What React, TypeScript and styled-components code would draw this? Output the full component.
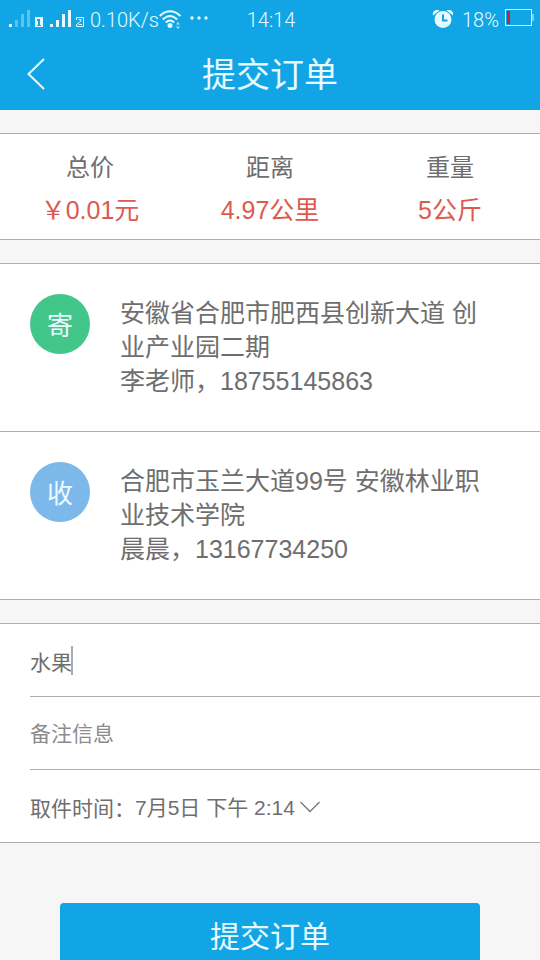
import React, { useState } from "react";
import styled, { createGlobalStyle } from "styled-components";

const GlobalStyle = createGlobalStyle`
  * { box-sizing: border-box; }
  body {
    margin: 0;
    background: #f6f6f6;
    color: #6e6e6e;
    font-family: "Noto Sans CJK SC", "Noto Sans", sans-serif;
    font-weight: 400;
  }
  button, input, select { font: inherit; color: inherit; }
`;

const blue = "#11a5e5";
const line = "#aeaeae";
const mixedFont = `"Liberation Sans", "Noto Sans CJK SC", sans-serif`;

const Screen = styled.div`
  display: flex;
  flex-direction: column;
  height: 100vh;
`;

const StatusBar = styled.div`
  display: grid;
  grid-template-columns: 1fr auto 1fr;
  align-items: center;
  height: 40px;
  padding: 0 6px 0 8px;
  background: ${blue};
  color: #e6fbff;
  font-family: Roboto, sans-serif;
  font-size: 20px;
  font-weight: 300;
  line-height: 40px;
  white-space: nowrap;
`;

const StatusGroup = styled.div<{ $end?: boolean }>`
  display: flex;
  align-items: center;
  justify-content: ${(p) => (p.$end ? "flex-end" : "flex-start")};
  svg { display: block; flex: none; }
`;

const StatusText = styled.span`
  margin: 0 6px 0 8px;
`;

const Speed = styled.span`
  margin: 0 0 0 4px;
`;

const NavBar = styled.header`
  display: grid;
  grid-template-columns: 72px 1fr 72px;
  align-items: start;
  height: 70px;
  background: ${blue};
  color: #e8faff;
`;

const BackButton = styled.button`
  display: flex;
  align-items: center;
  justify-content: center;
  height: 68px;
  padding: 0;
  border: 0;
  background: none;
`;

const Title = styled.h1`
  margin: 0;
  font-size: 34px;
  font-weight: 400;
  line-height: 66px;
  text-align: center;
`;

const Content = styled.main`
  display: flex;
  flex: 1;
  flex-direction: column;
  gap: 23px;
  min-height: 0;
  padding: 23px 0;
  overflow-y: auto;
  scrollbar-width: none;
`;

const Panel = styled.section`
  flex: none;
  border-top: 1px solid ${line};
  border-bottom: 1px solid ${line};
  background: #fff;
`;

const Summary = styled.dl`
  display: grid;
  grid-template-columns: repeat(3, 1fr);
  margin: 0;
  padding: 11px 0 8px;
  text-align: center;
`;

const SummaryLabel = styled.dt`
  font-size: 24px;
  line-height: 42px;
`;

const SummaryValue = styled.dd`
  margin: 0;
  padding-top: 2px;
  color: #dc5a4e;
  font-family: ${mixedFont};
  font-size: 25px;
  line-height: 42px;
`;

const Contact = styled.article`
  display: flex;
  align-items: flex-start;
  gap: 30px;
  padding: 30px 50px 33px 30px;
  & + & { border-top: 1px solid ${line}; }
`;

const Badge = styled.span<{ $color: string }>`
  flex: none;
  width: 60px;
  height: 60px;
  border-radius: 50%;
  background: ${(p) => p.$color};
  color: #effaff;
  font-size: 26px;
  line-height: 60px;
  text-align: center;
`;

const ContactText = styled.p`
  margin: 0;
  padding-top: 2px;
  font-family: ${mixedFont};
  font-size: 25px;
  line-height: 34px;
`;

const ContactLine = styled.span`
  display: block;
`;

const Fields = styled.form`
  padding-left: 30px;
`;

const FieldRow = styled.div`
  display: flex;
  align-items: center;
  height: 72px;
  padding-top: 2px;
  font-family: ${mixedFont};
  font-size: 21px;
  & + & {
    height: 73px;
    border-top: 1px solid ${line};
  }
`;

const TextInput = styled.input<{ $fit?: boolean }>`
  field-sizing: ${(p) => (p.$fit ? "content" : "fixed")};
  flex: ${(p) => (p.$fit ? "none" : "1")};
  min-width: 0;
  height: 42px;
  padding: 0;
  border: 0;
  outline: 0;
  background: none;
  caret-color: transparent;
  &::placeholder { color: #8c8c8c; opacity: 1; }
`;

const Caret = styled.span`
  width: 2px;
  height: 29px;
  margin: 0 0 2px -1px;
  background: #aaa;
`;

const TimeSelect = styled.select`
  appearance: none;
  field-sizing: content;
  height: 42px;
  padding: 0;
  border: 0;
  outline: 0;
  background: none;
`;

const Chevron = styled.svg`
  margin-left: 5px;
`;

const SubmitButton = styled.button`
  display: flex;
  flex: none;
  align-items: flex-start;
  justify-content: center;
  height: 66px;
  margin: 37px 60px 0;
  padding: 9px 0 0;
  border: 0;
  border-radius: 4px;
  background: ${blue};
  color: #e8faff;
  font-size: 30px;
  line-height: 44px;
`;

const summary = [
  { label: "总价", value: "￥0.01元" },
  { label: "距离", value: "4.97公里" },
  { label: "重量", value: "5公斤" },
];

const contacts = [
  {
    badge: "寄",
    color: "#42c689",
    address: "安徽省合肥市肥西县创新大道 创业产业园二期",
    person: "李老师，18755145863",
  },
  {
    badge: "收",
    color: "#7cb8ea",
    address: "合肥市玉兰大道99号 安徽林业职业技术学院",
    person: "晨晨，13167734250",
  },
];

function SignalIcons() {
  return (
    <svg width="78" height="20" viewBox="0 0 78 20" fill="#e6fbff" aria-hidden="true">
      <rect x="1" y="14" width="3" height="3" />
      <g opacity="0.35">
        <rect x="7" y="10" width="3" height="7" />
        <rect x="13" y="4" width="3" height="13" />
        <rect x="19" y="0" width="3" height="17" />
      </g>
      <path fillRule="evenodd" d="M27 7h8v10h-8zM29 9v2h1v4h-1v1h4v-1h-1v-6z" />
      <rect x="42" y="14" width="3" height="3" />
      <rect x="48" y="10" width="3" height="7" />
      <rect x="54" y="4" width="3" height="13" />
      <rect x="60" y="0" width="3" height="17" />
      <path d="M68.500 10V7.500h7V16.500H68.500V14.500L73 11V9.500H70.500M70.500 14.500H74" fill="none" stroke="#e6fbff" />
    </svg>
  );
}

function WifiIcon() {
  return (
    <svg width="23" height="20" viewBox="0 0 23 20" fill="none" stroke="#e6fbff" strokeWidth="2" aria-hidden="true">
      <path d="M.7 6Q11 -3.500 21.500 6M3.800 9.500Q11 2.500 18.200 9.500M6.800 12.500Q11 8.500 15.200 12.500" />
      <circle cx="11" cy="15.500" r="2.500" fill="#e6fbff" stroke="none" />
      <path d="M19 12l2 2.500h-4zM19 19l2-2.500h-4z" fill="#e6fbff" stroke="none" opacity=".75" />
    </svg>
  );
}

function DotsIcon() {
  return (
    <svg width="28" height="20" viewBox="0 0 28 20" fill="#e6fbff" aria-hidden="true">
      <circle cx="10" cy="8" r="1.700" />
      <circle cx="17" cy="8" r="1.700" />
      <circle cx="24" cy="8" r="1.700" />
    </svg>
  );
}

function AlarmIcon() {
  return (
    <svg width="22" height="22" viewBox="0 0 22 22" aria-hidden="true">
      <path d="M1 6.500C0 2 4 0 7.500 1.500ZM21 6.500C22 2 18 0 14.500 1.500Z" fill="#e6fbff" />
      <circle cx="11" cy="10.500" r="8.500" fill="#e6fbff" />
      <path d="M11 5.500v6h4.500" fill="none" stroke={blue} strokeWidth="2" />
    </svg>
  );
}

function BatteryIcon() {
  return (
    <svg width="29" height="22" viewBox="0 0 29 22" aria-hidden="true">
      <rect x=".5" y=".5" width="26" height="16" fill="none" stroke="#d6f5ff" />
      <rect x="2" y="2" width="3" height="13" fill="#c9232d" />
      <path d="M28 5v7" stroke="#d6f5ff" />
    </svg>
  );
}

export default function App() {
  const [goods, setGoods] = useState("水果");
  const [remark, setRemark] = useState("");

  return (
    <Screen>
      <GlobalStyle />
      <StatusBar>
        <StatusGroup>
          <SignalIcons />
          <Speed>0.10K/s</Speed>
          <WifiIcon />
          <DotsIcon />
        </StatusGroup>
        <span>14:14</span>
        <StatusGroup $end>
          <AlarmIcon />
          <StatusText>18%</StatusText>
          <BatteryIcon />
        </StatusGroup>
      </StatusBar>
      <NavBar>
        <BackButton type="button" aria-label="返回">
          <svg width="18" height="32" viewBox="0 0 18 32" fill="none" stroke="#e6fbff" strokeWidth="2" aria-hidden="true">
            <path d="M17 1L1.500 16L17 31" />
          </svg>
        </BackButton>
        <Title>提交订单</Title>
      </NavBar>
      <Content>
        <Panel>
          <Summary>
            {summary.map((item) => (
              <div key={item.label}>
                <SummaryLabel>{item.label}</SummaryLabel>
                <SummaryValue>{item.value}</SummaryValue>
              </div>
            ))}
          </Summary>
        </Panel>
        <Panel>
          {contacts.map((c) => (
            <Contact key={c.badge}>
              <Badge $color={c.color}>{c.badge}</Badge>
              <ContactText>
                <ContactLine>{c.address}</ContactLine>
                <ContactLine>{c.person}</ContactLine>
              </ContactText>
            </Contact>
          ))}
        </Panel>
        <Panel>
          <Fields id="order" onSubmit={(e) => e.preventDefault()}>
            <FieldRow>
              <TextInput $fit aria-label="物品" value={goods} onChange={(e) => setGoods(e.target.value)} />
              <Caret />
            </FieldRow>
            <FieldRow>
              <TextInput
                aria-label="备注信息"
                placeholder="备注信息"
                value={remark}
                onChange={(e) => setRemark(e.target.value)}
              />
            </FieldRow>
            <FieldRow>
              <label htmlFor="pickup">取件时间：</label>
              <TimeSelect id="pickup">
                <option>7月5日 下午 2:14</option>
              </TimeSelect>
              <Chevron width="20" height="12" viewBox="0 0 20 12" fill="none" stroke="#777" strokeWidth="1.300" aria-hidden="true">
                <path d="M.5 1L10 10.500L19.500 1" />
              </Chevron>
            </FieldRow>
          </Fields>
        </Panel>
        <SubmitButton type="submit" form="order">提交订单</SubmitButton>
      </Content>
    </Screen>
  );
}
